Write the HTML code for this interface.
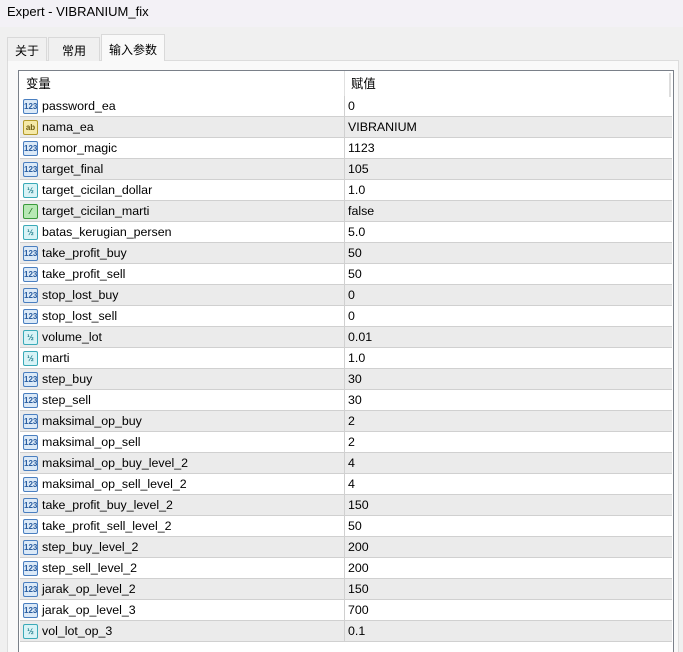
<!DOCTYPE html>
<html><head><meta charset="utf-8"><style>
*{margin:0;padding:0;box-sizing:border-box}
html,body{width:683px;height:652px;overflow:hidden}
body{background:#f0f0f0;font-family:"Liberation Sans","Noto Sans CJK SC",sans-serif;font-size:12.4px;color:#000;position:relative}
#title{position:absolute;left:0;top:0;width:683px;height:27px;background:#f3f1f6;padding:4px 0 0 7px;font-size:13px}
.tab{position:absolute;top:37px;height:24px;border:1px solid #d9d9d9;border-bottom:none;background:#f0f0f0;padding:4px 0 0 0;text-align:center;font-size:12px}
#panel{position:absolute;left:7px;top:60px;width:672px;height:600px;background:#f9f9f9;border:1px solid #dcdcdc}
#tbl{position:absolute;left:18px;top:70px;width:656px;height:600px;background:#fff;border:1px solid #7a8089}
.row{position:absolute;left:1px;width:652px;height:21px;border-bottom:1px solid #d0d0d0}
.g{background:#ebebeb}
.row .n{position:absolute;left:22px;top:3px;white-space:nowrap}
.row .v{position:absolute;left:328px;top:3px}
.row .d{position:absolute;left:324px;top:0;width:1px;height:21px;background:#d0d0d0}
.ic{position:absolute;left:3px;top:3px;width:15px;height:15px;border-radius:2px;font-size:8px;line-height:13px;text-align:center;font-weight:bold}
.i1{background:#dbe9f7;border:1px solid #4a7fc0;color:#2a5d9f}
.i2{background:#f5e9a8;border:1px solid #b39a2a;color:#6b5a10}
.i3{background:#d8f3f6;border:1px solid #3aaab8;color:#217e8c}
.i4{background:#b7e8b4;border:1px solid #3a9a3a;color:#1e6e1e}
</style></head><body>
<div id="title">Expert - VIBRANIUM_fix</div>
<div id="panel"></div>
<div class="tab" style="left:7px;width:40px">关于</div>
<div class="tab" style="left:48px;width:52px">常用</div>
<div class="tab" style="left:101px;width:64px;top:34px;height:27px;background:#f9f9f9;padding-top:6px">输入参数</div>
<div id="tbl">
<div style="position:absolute;left:7px;top:3px">变量</div>
<div style="position:absolute;left:325px;top:0;width:1px;height:25px;background:#e0e0e0"></div>
<div style="position:absolute;left:332px;top:3px">赋值</div>
<div style="position:absolute;right:2px;top:2px;width:2px;height:24px;background:#ddd"></div>
</div>
<div id="rows" style="position:absolute;left:19px;top:1px"></div>
<script>
var d=[["password_ea","0",1],["nama_ea","VIBRANIUM",2],["nomor_magic","1123",1],["target_final","105",1],["target_cicilan_dollar","1.0",3],["target_cicilan_marti","false",4],["batas_kerugian_persen","5.0",3],["take_profit_buy","50",1],["take_profit_sell","50",1],["stop_lost_buy","0",1],["stop_lost_sell","0",1],["volume_lot","0.01",3],["marti","1.0",3],["step_buy","30",1],["step_sell","30",1],["maksimal_op_buy","2",1],["maksimal_op_sell","2",1],["maksimal_op_buy_level_2","4",1],["maksimal_op_sell_level_2","4",1],["take_profit_buy_level_2","150",1],["take_profit_sell_level_2","50",1],["step_buy_level_2","200",1],["step_sell_level_2","200",1],["jarak_op_level_2","150",1],["jarak_op_level_3","700",1],["vol_lot_op_3","0.1",3]];
var lab={1:"123",2:"ab",3:"½",4:"⁄"};
var h="";
d.forEach(function(r,i){h+='<div class="row'+(i%2?' g':'')+'" style="top:'+(95+21*i)+'px"><div class="ic i'+r[2]+'">'+lab[r[2]]+'</div><div class="n">'+r[0]+'</div><div class="d"></div><div class="v">'+r[1]+'</div></div>';});
document.getElementById("rows").innerHTML=h;
</script>
</body></html>
